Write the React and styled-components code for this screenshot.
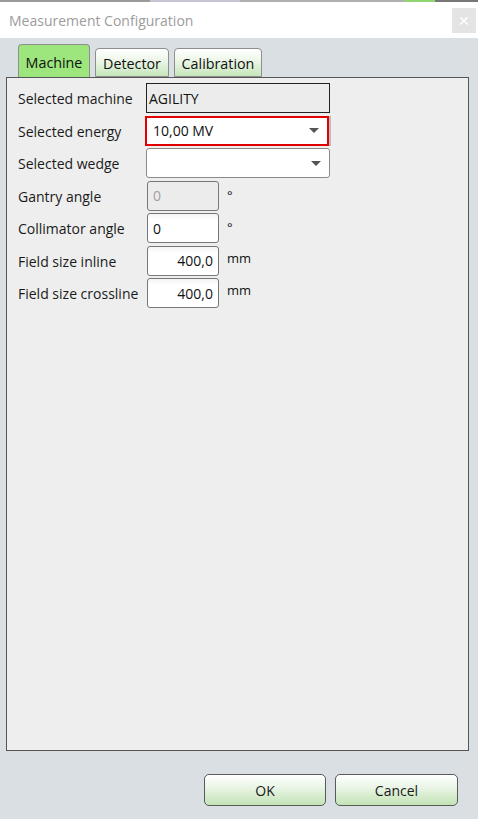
import React from "react";
import styled, {createGlobalStyle} from "styled-components";

const GlobalStyle = createGlobalStyle`
  html, body {
    margin: 0;
    padding: 0;
    background: #dadfe3;
  }
  body {
    font-family: "Open Sans", "Noto Sans", "Liberation Sans", sans-serif;
  }
`;

const Window = styled.div`
  width: 478px;
  height: 819px;
  display: flex;
  flex-direction: column;
  background: #dadfe3;
  overflow: hidden;
`;

const TopStrip = styled.div`
  height: 2px;
  background: linear-gradient(90deg, #9a9a9a 0 150px, #c9c4d6 150px 240px, #b0b0b0 240px 405px, #8fd66f 405px 435px, #777 435px 100%);
`;

const TitleBar = styled.div`
  height: 36px;
  background: #ffffff;
  display: flex;
  align-items: center;
  justify-content: space-between;
  padding: 0 2px 0 9px;
`;

const Title = styled.div`
  font-size: 14px;
  color: #9c9c9c;
`;

const CloseButton = styled.div`
  width: 24px;
  height: 25px;
  background: #e4e4e4;
  color: #ffffff;
  font-size: 14px;
  display: flex;
  align-items: center;
  justify-content: center;
`;

const TabRow = styled.div`
  display: flex;
  align-items: flex-end;
  gap: 5px;
  margin: 6px 0 0 18px;
  height: 33px;
  position: relative;
  z-index: 1;
`;

const Tab = styled.div`
  width: ${p => p.$w}px;
  height: ${p => (p.$active ? "33px" : "29px")};
  box-sizing: border-box;
  border: 1px solid #8e8e8e;
  border-bottom: ${p => (p.$active ? "none" : "1px solid #8e8e8e")};
  border-radius: 4px 4px 0 0;
  background: ${p => (p.$active
    ? "#9de57d"
    : "linear-gradient(180deg, #ffffff 0%, #eef7ea 40%, #c6e6bb 100%)")};
  font-size: 14.3px;
  color: #111;
  display: flex;
  align-items: center;
  justify-content: center;
  padding-top: ${p => (p.$active ? "2px" : "1px")};
`;

const Panel = styled.div`
  margin: 0 0 0 6px;
  width: 463px;
  height: 674px;
  box-sizing: border-box;
  border: 1px solid #555;
  background: #eeeeee;
  padding: 5px 0 0 11px;
  display: grid;
  grid-template-columns: 128px auto;
  grid-auto-rows: 30px;
  row-gap: 2.5px;
  align-content: start;
`;

const Label = styled.div`
  font-size: 14px;
  color: #1a1a1a;
  display: flex;
  align-items: center;
  padding-top: 1px;
`;

const FieldCell = styled.div`
  display: flex;
  align-items: flex-start;
  gap: 8px;
`;

const ReadOnlyBox = styled.div`
  width: 184px;
  height: 30px;
  box-sizing: border-box;
  border: 1px solid #222;
  background: #ececec;
  font-size: 14px;
  color: #111;
  display: flex;
  align-items: center;
  padding-left: 2px;
`;

const Combo = styled.div`
  width: 184px;
  height: 30px;
  box-sizing: border-box;
  border: ${p => (p.$focused ? "2px solid #e30000" : "1px solid #8a8a8a")};
  border-radius: ${p => (p.$focused ? "0" : "3px")};
  background: #ffffff;
  box-shadow: ${p => (p.$focused ? "2px 0 0 #bdbdbd" : "none")};
  font-size: 14px;
  color: #111;
  display: flex;
  align-items: center;
  justify-content: space-between;
  padding: 0 8px 0 ${p => (p.$focused ? "6px" : "7px")};
  margin-left: ${p => (p.$focused ? "-1px" : "0")};
`;

const Arrow = styled.span`
  width: 0;
  height: 0;
  border-left: 5px solid transparent;
  border-right: 5px solid transparent;
  border-top: 5px solid #555;
`;

const NumberBox = styled.div`
  width: 72px;
  height: 30px;
  margin-left: 1px;
  box-sizing: border-box;
  border: 1px solid #777;
  border-radius: 3px;
  background: ${p => (p.$disabled ? "#ececec" : "linear-gradient(180deg, #f4f4f4 0, #ffffff 6px)")};
  font-size: 14px;
  color: ${p => (p.$disabled ? "#a0a0a0" : "#111")};
  display: flex;
  align-items: center;
  justify-content: ${p => (p.$right ? "flex-end" : "flex-start")};
  padding: 0 5px;
`;

const Unit = styled.span`
  font-size: 13px;
  color: #111;
  line-height: 1;
  margin-top: ${p => (p.$deg ? "8px" : "6px")};
`;

const Footer = styled.div`
  display: flex;
  justify-content: flex-end;
  gap: 9px;
  padding: 23px 20px 0 0;
`;

const Button = styled.button`
  width: ${p => p.$w}px;
  height: 32px;
  box-sizing: border-box;
  border: 1px solid #5a5a5a;
  border-radius: 5px;
  background: linear-gradient(180deg, #ffffff 0%, #e8f4e3 45%, #c2e3b5 100%);
  font-family: "Open Sans", "Noto Sans", "Liberation Sans", sans-serif;
  font-size: 14px;
  color: #1a1a1a;
  padding: 0;
`;

const rows = [
    {label: "Gantry angle", value: "0", unit: "°", disabled: true},
    {label: "Collimator angle", value: "0", unit: "°"},
    {label: "Field size inline", value: "400,0", unit: "mm", right: true},
    {label: "Field size crossline", value: "400,0", unit: "mm", right: true},
];

function App() {
    return (
        <Window>
            <GlobalStyle/>
            <TopStrip/>
            <TitleBar>
                <Title>Measurement Configuration</Title>
                <CloseButton>✕</CloseButton>
            </TitleBar>
            <TabRow>
                <Tab $active $w={72}>Machine</Tab>
                <Tab $w={74}>Detector</Tab>
                <Tab $w={88}>Calibration</Tab>
            </TabRow>
            <Panel>
                <Label>Selected machine</Label>
                <FieldCell>
                    <ReadOnlyBox>AGILITY</ReadOnlyBox>
                </FieldCell>

                <Label>Selected energy</Label>
                <FieldCell>
                    <Combo $focused>10,00 MV<Arrow/></Combo>
                </FieldCell>

                <Label>Selected wedge</Label>
                <FieldCell>
                    <Combo><span/><Arrow/></Combo>
                </FieldCell>

                {rows.map(r => (
                    <React.Fragment key={r.label}>
                        <Label>{r.label}</Label>
                        <FieldCell>
                            <NumberBox $disabled={r.disabled} $right={r.right}>{r.value}</NumberBox>
                            <Unit $deg={r.unit === "°"}>{r.unit}</Unit>
                        </FieldCell>
                    </React.Fragment>
                ))}
            </Panel>
            <Footer>
                <Button $w={122}>OK</Button>
                <Button $w={123}>Cancel</Button>
            </Footer>
        </Window>
    );
}

export default App;
